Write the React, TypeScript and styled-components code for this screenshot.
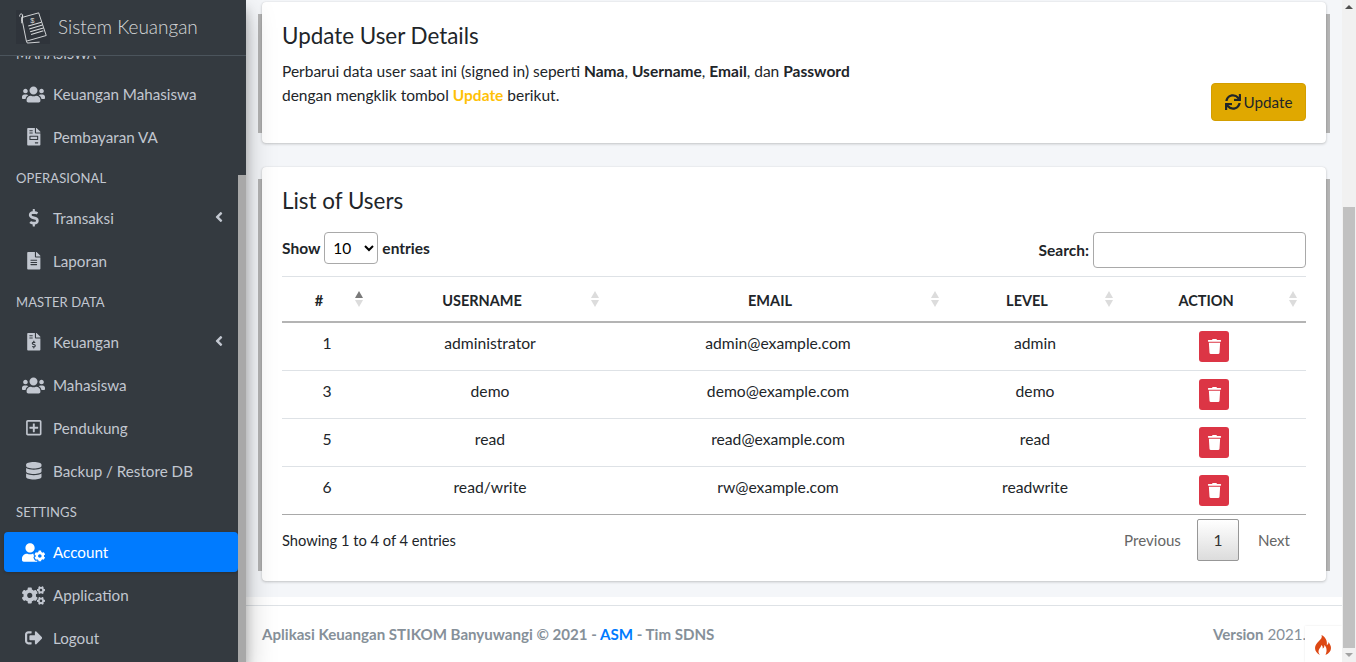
import { ReactNode } from "react";
import styled, { createGlobalStyle } from "styled-components";
import {
  FaUsers,
  FaFileInvoice,
  FaDollarSign,
  FaFileAlt,
  FaFileInvoiceDollar,
  FaRegPlusSquare,
  FaDatabase,
  FaUserCog,
  FaCogs,
  FaSignOutAlt,
  FaAngleLeft,
  FaSync,
  FaTrash,
} from "react-icons/fa";

const FONT = `"Lato", "Noto Sans", sans-serif`;

const GlobalStyle = createGlobalStyle`
  html {
    background: #f4f6f9;
  }
  html, body {
    margin: 0;
    padding: 0;
    height: 662px;
    overflow: hidden;
    font-family: ${FONT};
    font-size: 15.5px;
    color: #212529;
  }
  * { box-sizing: border-box; }
  svg { display: block; }
`;

type NavItem =
  | { kind: "head"; label: string }
  | { kind: "link"; label: string; icon: ReactNode; wide?: boolean; arrow?: boolean; active?: boolean };

const NAV: NavItem[] = [
  { kind: "head", label: "MAHASISWA" },
  { kind: "link", label: "Keuangan Mahasiswa", icon: <FaUsers />, wide: true },
  { kind: "link", label: "Pembayaran VA", icon: <FaFileInvoice /> },
  { kind: "head", label: "OPERASIONAL" },
  { kind: "link", label: "Transaksi", icon: <FaDollarSign />, arrow: true },
  { kind: "link", label: "Laporan", icon: <FaFileAlt /> },
  { kind: "head", label: "MASTER DATA" },
  { kind: "link", label: "Keuangan", icon: <FaFileInvoiceDollar />, arrow: true },
  { kind: "link", label: "Mahasiswa", icon: <FaUsers />, wide: true },
  { kind: "link", label: "Pendukung", icon: <FaRegPlusSquare /> },
  { kind: "link", label: "Backup / Restore DB", icon: <FaDatabase /> },
  { kind: "head", label: "SETTINGS" },
  { kind: "link", label: "Account", icon: <FaUserCog />, wide: true, active: true },
  { kind: "link", label: "Application", icon: <FaCogs />, wide: true },
  { kind: "link", label: "Logout", icon: <FaSignOutAlt /> },
];

const USERS = [
  { id: 1, username: "administrator", email: "admin@example.com", level: "admin" },
  { id: 3, username: "demo", email: "demo@example.com", level: "demo" },
  { id: 5, username: "read", email: "read@example.com", level: "read" },
  { id: 6, username: "read/write", email: "rw@example.com", level: "readwrite" },
];

const COLUMNS = [
  { label: "#", width: 90, active: true },
  { label: "USERNAME", width: 236 },
  { label: "EMAIL", width: 340 },
  { label: "LEVEL", width: 174 },
  { label: "ACTION", width: 184 },
];

const BrandLogo = () => (
  <svg width="34" height="36" viewBox="0 0 36 36" fill="none" stroke="#d9dbdd" strokeWidth="1">
    <rect width="36" height="36" fill="#2f343b" stroke="none" />
    <path d="M6 8 L24 3 L32 27 L11 33 Z" />
    <path d="M7 5 L6 12 M4 7 C3 4 7 3 7 6 L6 14" />
    <path d="M13 17 L27 13 M14 20 L28 16 M15 23 L29 19 M16 26 L29 22" strokeWidth="1.1" />
    <path d="M11 33 L12 35 L25 34" />
    <text x="15" y="14" fontSize="8" fill="#d9dbdd" stroke="none" fontFamily="Liberation Sans, sans-serif">$</text>
  </svg>
);

const FlameLogo = () => (
  <svg width="18" height="20" viewBox="0 0 18 20">
    <path
      fill="#dd4814"
      d="M7.5 0 C8.5 2.5 7 4 5 6 C3 8 1 10 1 13 C1 16 3 18.5 6 20 C4.5 18.5 4 16.5 5 14.5 C5.6 13.2 7 12 7.5 10 C9 11.5 8.8 12.5 8.6 13.5 C10 13 10.6 11.5 10.3 10 C12.5 12 13.5 15.5 11.5 20 C15 18.5 17 16 17 13 C17 10.5 15.5 8.5 14.5 7 C14.5 8.5 14 9.5 12.8 10 C13.5 6 11.5 2 7.5 0 Z"
    />
  </svg>
);

const SortArrows = ({ active }: { active?: boolean }) => (
  <SortIcon width="8" height="16" viewBox="0 0 8 16">
    <path d="M4 0 L8 7 L0 7 Z" fill={active ? "#7a7a7a" : "#dcdcdc"} />
    <path d="M4 16 L8 9 L0 9 Z" fill="#dcdcdc" />
  </SortIcon>
);

export default function App() {
  return (
    <>
      <GlobalStyle />
      <Shell>
        <Sidebar>
          <Brand>
            <BrandLogo />
            <BrandText>Sistem Keuangan</BrandText>
          </Brand>
          <NavViewport>
            <NavList>
              {NAV.map((item) =>
                item.kind === "head" ? (
                  <NavHead key={item.label}>{item.label}</NavHead>
                ) : (
                  <NavLink key={item.label} $active={item.active}>
                    <NavIcon $wide={item.wide}>{item.icon}</NavIcon>
                    <span>{item.label}</span>
                    {item.arrow && (
                      <NavArrow>
                        <FaAngleLeft />
                      </NavArrow>
                    )}
                  </NavLink>
                )
              )}
            </NavList>
          </NavViewport>
          <SideTrack>
            <SideThumb />
          </SideTrack>
        </Sidebar>

        <Main>
          <Content>
            <Card>
              <CardBody>
                <CardTitle>Update User Details</CardTitle>
                <Para>
                  Perbarui data user saat ini (signed in) seperti <b>Nama</b>, <b>Username</b>, <b>Email</b>, dan <b>Password</b>
                  <br />
                  dengan mengklik tombol <Hilite>Update</Hilite> berikut.
                </Para>
                <UpdateRow>
                  <UpdateButton>
                    <FaSync />
                    Update
                  </UpdateButton>
                </UpdateRow>
              </CardBody>
            </Card>

            <Card>
              <CardBody>
                <CardTitle>List of Users</CardTitle>
                <Controls>
                  <ControlLabel>
                    Show
                    <LengthSelect defaultValue="10">
                      <option>10</option>
                      <option>25</option>
                    </LengthSelect>
                    entries
                  </ControlLabel>
                  <ControlLabel>
                    Search:
                    <SearchInput />
                  </ControlLabel>
                </Controls>
                <Table>
                  <colgroup>
                    {COLUMNS.map((c) => (
                      <col key={c.label} width={c.width} />
                    ))}
                  </colgroup>
                  <thead>
                    <tr>
                      {COLUMNS.map((c) => (
                        <Th key={c.label}>
                          {c.label}
                          <SortArrows active={c.active} />
                        </Th>
                      ))}
                    </tr>
                  </thead>
                  <tbody>
                    {USERS.map((u) => (
                      <tr key={u.id}>
                        <Td>{u.id}</Td>
                        <Td>{u.username}</Td>
                        <Td>{u.email}</Td>
                        <Td>{u.level}</Td>
                        <Td>
                          <DeleteButton aria-label="Delete">
                            <FaTrash />
                          </DeleteButton>
                        </Td>
                      </tr>
                    ))}
                  </tbody>
                </Table>
                <TableFooter>
                  <TableInfo>Showing 1 to 4 of 4 entries</TableInfo>
                  <Pager>
                    <PageLink>Previous</PageLink>
                    <PageCurrent>1</PageCurrent>
                    <PageLink>Next</PageLink>
                  </Pager>
                </TableFooter>
              </CardBody>
            </Card>
          </Content>

          <Footer>
            <FooterBar>
              <strong>
                Aplikasi Keuangan STIKOM Banyuwangi © 2021 - <FooterLink>ASM</FooterLink> - Tim SDNS
              </strong>
              <span>
                <b>Version</b> 2021.
              </span>
            </FooterBar>
            <FlameBadge>
              <FlameLogo />
            </FlameBadge>
          </Footer>
        </Main>

        <PageScrollbar>
          <ScrollArrowUp />
          <PageThumb />
          <ScrollArrowDown />
        </PageScrollbar>
      </Shell>
    </>
  );
}

const Shell = styled.div`
  display: flex;
  width: 1356px;
  height: 662px;
  overflow: hidden;
`;

const Sidebar = styled.aside`
  position: relative;
  width: 246px;
  height: 662px;
  flex: none;
  display: flex;
  flex-direction: column;
  background: #343a40;
  box-shadow: 0 14px 28px rgba(0, 0, 0, 0.25), 0 10px 10px rgba(0, 0, 0, 0.22);
  z-index: 2;
`;

const Brand = styled.div`
  height: 56px;
  flex: none;
  display: flex;
  align-items: center;
  gap: 8px;
  padding: 0 0 2px 16px;
  border-bottom: 1px solid #4b545c;
  background: #343a40;
  position: relative;
  z-index: 1;
`;

const BrandText = styled.span`
  font-size: 19px;
  font-weight: 300;
  color: rgba(255, 255, 255, 0.8);
`;

const NavViewport = styled.nav`
  flex: 1;
  overflow: hidden;
  padding-right: 8px;
`;

const NavList = styled.div`
  margin-top: -20px;
  padding: 0 0 0 4px;
  display: flex;
  flex-direction: column;
`;

const NavHead = styled.div`
  height: 38px;
  padding: 9px 0 0 12px;
  font-size: 13px;
  line-height: 18px;
  letter-spacing: 0.1px;
  color: #c2c7d0;
`;

const NavLink = styled.a<{ $active?: boolean }>`
  display: flex;
  align-items: center;
  height: 40px;
  margin-bottom: 3px;
  padding: 0 11px 0 14px;
  border-radius: 4px;
  font-size: 15.2px;
  color: ${(p) => (p.$active ? "#fff" : "#c2c7d0")};
  background: ${(p) => (p.$active ? "#007bff" : "transparent")};
  box-shadow: ${(p) => (p.$active ? "0 1px 3px rgba(0,0,0,.2)" : "none")};
`;

const NavIcon = styled.span<{ $wide?: boolean }>`
  width: 35px;
  flex: none;
  display: flex;
  justify-content: center;
  padding-right: 4px;
  font-size: ${(p) => (p.$wide ? "23px" : "17.6px")};
`;

const NavArrow = styled.span`
  margin-left: auto;
  margin-top: -2px;
  display: flex;
  font-size: 16px;
`;

const SideTrack = styled.div`
  position: absolute;
  top: 0;
  right: 0;
  bottom: 0;
  width: 8px;
  background: #343a40;
`;

const SideThumb = styled.div`
  position: absolute;
  top: 175px;
  left: 0;
  bottom: 0;
  width: 8px;
  background: #a8a8a8;
`;

const Main = styled.main`
  flex: 1;
  min-width: 0;
  display: flex;
  flex-direction: column;
`;

const Content = styled.div`
  flex: none;
  height: 597px;
  padding: 2px 16px 0;
  display: flex;
  flex-direction: column;
  gap: 24px;
`;

const Card = styled.section`
  position: relative;
  isolation: isolate;
  border-radius: 4px;

  &::before {
    content: "";
    position: absolute;
    top: 12px;
    bottom: 10px;
    left: -4px;
    right: -4px;
    background: #b4b4b4;
    z-index: -1;
  }
`;

const CardBody = styled.div`
  padding: 20px;
  background: #fff;
  border-radius: 4px;
  box-shadow: 0 0 1px rgba(0, 0, 0, 0.125), 0 1px 3px rgba(0, 0, 0, 0.2);
`;

const CardTitle = styled.h3`
  margin: 0 0 9px;
  font-size: 22.4px;
  line-height: 28px;
  font-weight: 400;
  color: #212529;
`;

const Para = styled.p`
  margin: 0;
  font-size: 15.5px;
  line-height: 24px;
`;

const Hilite = styled.b`
  color: #ffc107;
`;

const UpdateRow = styled.div`
  display: flex;
  justify-content: flex-end;
  margin-top: -24px;
  margin-bottom: 2px;
`;

const UpdateButton = styled.button`
  display: flex;
  align-items: center;
  justify-content: center;
  gap: 3px;
  width: 95px;
  height: 38px;
  padding: 0;
  border: 1px solid #d39e00;
  border-radius: 4px;
  background: #e0a800;
  color: #212529;
  font-family: ${FONT};
  font-size: 15.2px;

  svg {
    font-size: 16px;
  }
`;

const Controls = styled.div`
  display: flex;
  justify-content: space-between;
  align-items: flex-start;
  margin-top: 17px;
  margin-bottom: 8px;
`;

const ControlLabel = styled.label`
  display: flex;
  align-items: center;
  gap: 4px;
  font-weight: 700;
  font-size: 15.5px;
`;

const LengthSelect = styled.select`
  width: 54px;
  height: 32px;
  padding: 0 2px 0 4px;
  border: 1px solid #a9a9a9;
  border-radius: 4px;
  background: #fff;
  font-family: ${FONT};
  font-size: 15.5px;
`;

const SearchInput = styled.input`
  width: 213px;
  height: 36px;
  border: 1px solid #a9a9a9;
  border-radius: 4px;
  background: #fff;
`;

const Table = styled.table`
  width: 100%;
  table-layout: fixed;
  border-collapse: collapse;
  border-top: 1px solid #dee2e6;
  border-bottom: 1px solid #a9a9a9;
`;

const Th = styled.th`
  position: relative;
  height: 45px;
  padding: 3px 16px 0 0;
  border-bottom: 2px solid #b4b4b4;
  text-align: center;
  font-size: 14.5px;
  font-weight: 700;
`;

const SortIcon = styled.svg`
  position: absolute;
  right: 9px;
  top: 14px;
`;

const Td = styled.td`
  height: 48px;
  padding: 9px 10px 0;
  vertical-align: top;
  border-top: 1px solid #dee2e6;
  text-align: center;
  font-size: 15.7px;
  line-height: 22px;

  tr:first-child > & {
    border-top: 0;
    height: 49px;
  }
`;

const DeleteButton = styled.button`
  display: inline-flex;
  align-items: center;
  justify-content: center;
  width: 30px;
  height: 31px;
  margin-top: -1px;
  padding: 0;
  border: 0;
  border-radius: 3px;
  background: #dc3545;
  color: #fff;
  font-size: 15px;
  vertical-align: top;
`;

const TableFooter = styled.div`
  display: flex;
  justify-content: space-between;
  align-items: flex-start;
  padding-top: 4px;
  height: 46px;
`;

const TableInfo = styled.span`
  line-height: 42px;
  font-size: 14.7px;
`;

const Pager = styled.div`
  display: flex;
  align-items: center;
`;

const PageLink = styled.a`
  padding: 0 16px 0 19px;
  color: #666;
  font-size: 15.1px;
`;

const PageCurrent = styled.a`
  display: flex;
  align-items: center;
  justify-content: center;
  width: 42px;
  height: 42px;
  border: 1px solid #979797;
  border-radius: 2px;
  background: linear-gradient(to bottom, #fff 0%, #dcdcdc 100%);
  color: #333;
  font-size: 15.5px;
`;

const Footer = styled.footer`
  position: relative;
  flex: 1;
  padding-top: 8px;
  background: #fff;
  color: #869099;
  font-size: 15.1px;
`;

const FooterBar = styled.div`
  height: 57px;
  display: flex;
  justify-content: space-between;
  align-items: center;
  padding: 0 36px 0 16px;
  border-top: 1px solid #dee2e6;
`;

const FooterLink = styled.a`
  color: #007bff;
`;

const FlameBadge = styled.div`
  position: absolute;
  right: 0;
  bottom: 0;
  width: 37px;
  height: 36px;
  display: flex;
  align-items: center;
  justify-content: center;
  padding: 2px 2px 0 0;
  background: #fff;
  box-shadow: 0 0 2px rgba(0, 0, 0, 0.1);
`;

const PageScrollbar = styled.div`
  width: 14px;
  flex: none;
  position: relative;
  background: #f1f1f1;
`;

const PageThumb = styled.div`
  position: absolute;
  top: 207px;
  left: 1px;
  right: 1px;
  bottom: 14px;
  background: #c1c1c1;
`;

const ScrollArrowUp = styled.div`
  position: absolute;
  top: 5px;
  left: 3px;
  border-left: 4px solid transparent;
  border-right: 4px solid transparent;
  border-bottom: 4px solid #505050;
`;

const ScrollArrowDown = styled.div`
  position: absolute;
  bottom: 5px;
  left: 3px;
  border-left: 4px solid transparent;
  border-right: 4px solid transparent;
  border-top: 4px solid #a3a3a3;
`;
